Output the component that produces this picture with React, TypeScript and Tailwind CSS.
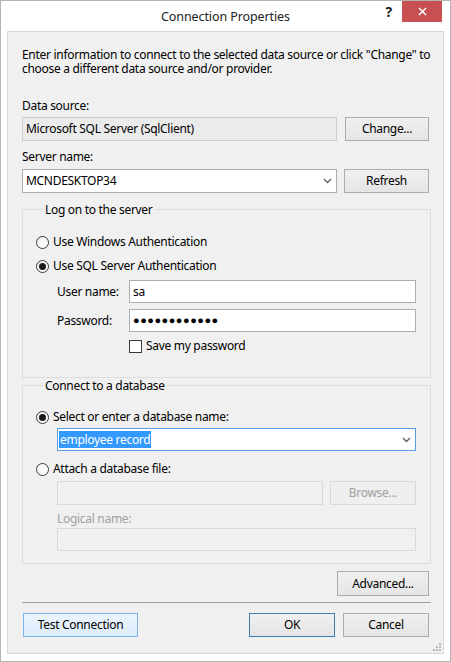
import type { ReactNode } from "react";

function Btn({
  children,
  className = "",
  variant = "normal",
}: {
  children: ReactNode;
  className?: string;
  variant?: "normal" | "hot" | "default" | "disabled";
}) {
  const look = {
    normal: "border-[#acacac] bg-gradient-to-b from-[#f0f0f0] to-[#e5e5e5] text-black",
    hot: "border-[#7eb4ea] bg-gradient-to-b from-[#ecf4fc] to-[#dcecfc] text-black",
    default: "border-[#3c7fb1] bg-gradient-to-b from-[#f0f0f0] to-[#e5e5e5] text-black",
    disabled: "border-[#d9d9d9] bg-[#efefef] text-[#a0a0a0]",
  }[variant];
  return (
    <div className={`flex h-[24px] items-center justify-center border ${look} ${className}`}>
      {children}
    </div>
  );
}

function Chevron() {
  return (
    <svg width="9" height="6" viewBox="0 0 9 6" className="shrink-0">
      <polyline points="1,1 4.5,4.5 8,1" fill="none" stroke="#606060" strokeWidth="1.4" />
    </svg>
  );
}

function Radio({ checked, label }: { checked?: boolean; label: string }) {
  return (
    <div className="flex h-[16px] items-center gap-[4px]">
      <span className="flex h-[13px] w-[13px] items-center justify-center rounded-full border border-[#3a3a3a] bg-gradient-to-br from-[#f4f4f4] to-white">
        {checked && <span className="h-[7px] w-[7px] rounded-full bg-[#1a1a1a]" />}
      </span>
      <span>{label}</span>
    </div>
  );
}

function GroupBox({ title, className = "", children }: { title: string; className?: string; children: ReactNode }) {
  return (
    <fieldset className={`-mr-[2px] border border-[#dcdcdc] ${className}`}>
      <legend className="ml-[7px] px-[2px] leading-[15px]">{title}</legend>
      {children}
    </fieldset>
  );
}

export default function App() {
  return (
    <div className="flex h-[662px] w-[451px] flex-col border border-[#b4b4b4] bg-white font-['Segoe_UI','Noto_Sans',sans-serif] text-[12px] tracking-[-0.3px] text-black">
      {/* title bar */}
      <div className="grid h-[30px] shrink-0 grid-cols-[1fr_auto_1fr]">
        <div />
        <div className="pt-[7px] text-[12.5px] leading-[18px] tracking-[-0.1px] text-[#222]">Connection Properties</div>
        <div className="flex items-start justify-end">
          <span className="mr-[10px] mt-[2px] text-[14px] font-bold leading-[18px] text-[#222]">?</span>
          <div className="mr-[8px] flex h-[21px] w-[40px] items-center justify-center bg-[#c75050]">
            <svg width="9" height="9" viewBox="0 0 9 9">
              <path d="M1 1 L8 8 M8 1 L1 8" stroke="white" strokeWidth="1.5" />
            </svg>
          </div>
        </div>
      </div>

      {/* client area */}
      <div className="relative mx-[6px] mb-[7px] flex flex-1 flex-col border border-[#d9d9d9] bg-[#f0f0f0] px-[14px]">
        <p className="-mr-[8px] pt-[16px] leading-[14px]">
          Enter information to connect to the selected data source or click "Change" to choose a different data source
          and/or provider.
        </p>

        <div className="mt-[22px] leading-[15px]">Data source:</div>
        <div className="mt-[4px] flex gap-[8px]">
          <div className="flex h-[24px] flex-1 items-center border border-[#cdcdcd] bg-[#ebebeb] pl-[3px]">
            Microsoft SQL Server (SqlClient)
          </div>
          <Btn className="w-[84px]">Change...</Btn>
        </div>

        <div className="mt-[8px] leading-[15px]">Server name:</div>
        <div className="mt-[5px] flex gap-[7px]">
          <div className="flex h-[24px] flex-1 items-center justify-between border border-[#abadb3] bg-white pl-[3px] pr-[4px]">
            <span>MCNDESKTOP34</span>
            <Chevron />
          </div>
          <Btn className="w-[85px]">Refresh</Btn>
        </div>

        <GroupBox title="Log on to the server" className="mt-[9px] pb-[22px] pl-[13px] pr-[14px]">
          <div className="mt-[17px] flex flex-col gap-[8px]">
            <Radio label="Use Windows Authentication" />
            <Radio checked label="Use SQL Server Authentication" />
          </div>
          <div className="ml-[21px] mt-[6px] grid grid-cols-[72px_1fr] items-center gap-y-[6px]">
            <span>User name:</span>
            <div className="flex h-[23px] items-center border border-[#abadb3] bg-white pl-[3px]">sa</div>
            <span>Password:</span>
            <div className="flex h-[23px] items-center border border-[#abadb3] bg-white pl-[3px] text-[11px] tracking-[0.5px]">
              ●●●●●●●●●●●●
            </div>
            <span />
            <div className="-mt-[1px] flex items-center gap-[4px]">
              <span className="h-[13px] w-[13px] border border-[#3a3a3a] bg-white" />
              <span>Save my password</span>
            </div>
          </div>
        </GroupBox>

        <GroupBox title="Connect to a database" className="pb-[12px] pl-[13px] pr-[14px]">
          <div className="mt-[16px]">
            <Radio checked label="Select or enter a database name:" />
          </div>
          <div className="ml-[21px] mt-[3px] flex h-[23px] items-center justify-between border border-[#569de5] bg-white pl-[1px] pr-[4px]">
            <span className="bg-[#3399ff] px-[1px] leading-[17px] text-white">employee record</span>
            <Chevron />
          </div>
          <div className="mt-[10px]">
            <Radio label="Attach a database file:" />
          </div>
          <div className="ml-[21px] mt-[4px] flex gap-[7px]">
            <div className="h-[24px] flex-1 border border-[#d9d9d9] bg-[#f0f0f0]" />
            <Btn variant="disabled" className="w-[86px]">
              Browse...
            </Btn>
          </div>
          <div className="ml-[21px] mt-[6px] leading-[15px] text-[#a0a0a0]">Logical name:</div>
          <div className="ml-[21px] mt-[2px] h-[23px] border border-[#d9d9d9] bg-[#f0f0f0]" />
        </GroupBox>

        <div className="mt-[7px] flex justify-end">
          <Btn className="h-[25px] w-[92px]">Advanced...</Btn>
        </div>

        <div className="-mr-[2px] mt-[6px] h-px bg-[#a0a0a0]" />

        <div className="mt-[10px] flex items-center">
          <Btn variant="hot" className="ml-[1px] w-[115px]">
            Test Connection
          </Btn>
          <div className="flex-1" />
          <Btn variant="default" className="w-[86px]">
            OK
          </Btn>
          <Btn className="ml-[8px] w-[86px]">Cancel</Btn>
        </div>

        {/* size grip */}
        <svg width="8" height="8" viewBox="0 0 8 8" className="absolute bottom-[2px] right-[2px]">
          {[
            [6, 0],
            [6, 3],
            [3, 3],
            [6, 6],
            [3, 6],
            [0, 6],
          ].map(([x, y]) => (
            <rect key={`${x}-${y}`} x={x} y={y} width="2" height="2" fill="#b8b8b8" />
          ))}
        </svg>
      </div>
    </div>
  );
}
